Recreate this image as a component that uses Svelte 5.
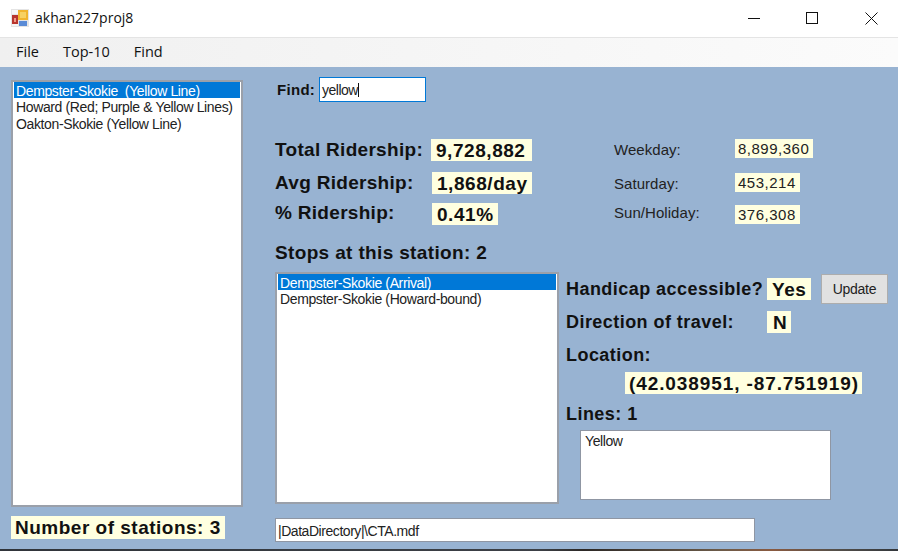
<script>
	let stations = ['Dempster-Skokie  (Yellow Line)', 'Howard (Red; Purple & Yellow Lines)', 'Oakton-Skokie (Yellow Line)'];
	let stops = ['Dempster-Skokie (Arrival)', 'Dempster-Skokie (Howard-bound)'];
	let totals = [
		{ label: 'Total Ridership:', value: '9,728,882', width: 101 },
		{ label: 'Avg Ridership:', value: '1,868/day', width: 100 },
		{ label: '% Ridership:', value: '0.41%', width: 66 }
	];
	let days = [
		{ label: 'Weekday:', value: '8,899,360', width: 78 },
		{ label: 'Saturday:', value: '453,214', width: 65 },
		{ label: 'Sun/Holiday:', value: '376,308', width: 65 }
	];
</script>

<div class="window">
	<header class="titlebar">
		<svg class="appicon" width="18" height="18" viewBox="0 0 18 18">
			<rect width="18" height="18" fill="#e4e4e4" />
			<rect x="1" y="1" width="7" height="4" fill="#f6f6f6" />
			<rect x="1" y="6" width="6" height="9" fill="#b8352e" />
			<rect x="3" y="9" width="2" height="4" fill="#ef9a86" />
			<rect x="1" y="15" width="6" height="2" fill="#f4f4f4" />
			<rect x="7" y="1" width="10" height="10" fill="#f1b42f" />
			<rect x="9" y="3" width="6" height="6" fill="#f7d163" />
			<rect x="8" y="12" width="8" height="5" fill="#5a8bd6" />
		</svg>
		<span class="title">akhan227proj8</span>
		<div class="controls">
			<svg width="12" height="1" viewBox="0 0 12 1"><rect width="12" height="1" fill="#111" /></svg>
			<svg width="12" height="12" viewBox="0 0 12 12"><rect x="0.5" y="0.5" width="11" height="11" fill="none" stroke="#111" /></svg>
			<svg width="13" height="13" viewBox="0 0 13 13"><path d="M0.5 0.5 L12.5 12.5 M12.5 0.5 L0.5 12.5" stroke="#111" fill="none" /></svg>
		</div>
	</header>

	<nav class="menu">
		<span>File</span>
		<span>Top-10</span>
		<span>Find</span>
	</nav>

	<main class="form">
		<section class="left">
			<ul class="list stations">
				{#each stations as s, i}
					<li class:sel={i === 0}>{s}</li>
				{/each}
			</ul>
			<div class="count">Number of stations: 3</div>
		</section>

		<section class="right">
			<div class="find">
				<label for="find">Find:</label>
				<div class="findbox" id="find">yellow<i class="caret"></i></div>
			</div>

			<div class="stats">
				<div class="totals">
					{#each totals as t}
						<div class="stat">
							<span class="biglabel">{t.label}</span>
							<span class="bigvalue" style="width: {t.width}px">{t.value}</span>
						</div>
					{/each}
				</div>
				<div class="days">
					{#each days as d}
						<div class="day">
							<span class="daylabel">{d.label}</span>
							<span class="dayvalue" style="width: {d.width}px">{d.value}</span>
						</div>
					{/each}
				</div>
			</div>

			<div class="stopshead">Stops at this station: 2</div>

			<div class="lower">
				<ul class="list stops">
					{#each stops as s, i}
						<li class:sel={i === 0}>{s}</li>
					{/each}
				</ul>
				<div class="details">
					<div class="handicap">
						<span class="biglabel small">Handicap accessible?</span>
						<span class="bigvalue yes">Yes</span>
						<button class="update">Update</button>
					</div>
					<div class="direction">
						<span class="biglabel small">Direction of travel:</span>
						<span class="bigvalue dir">N</span>
					</div>
					<div class="biglabel small location">Location:</div>
					<div class="bigvalue coords">(42.038951, -87.751919)</div>
					<div class="biglabel small lineshead">Lines: 1</div>
					<div class="lines">Yellow</div>
				</div>
			</div>

			<div class="path">|DataDirectory|\CTA.mdf</div>
		</section>
	</main>
	<div class="edge"></div>
</div>

<style>
	:global(body) {
		margin: 0;
		background: #98b3d2;
	}

	.window {
		width: 898px;
		height: 551px;
		display: flex;
		flex-direction: column;
		overflow: hidden;
		font-family: 'Liberation Sans', Arial, sans-serif;
		font-size: 14px;
		color: #111;
	}

	.titlebar {
		height: 37px;
		flex: none;
		display: flex;
		align-items: center;
		padding-left: 11px;
		background: #fff;
		border-bottom: 1px solid #e4e4e4;
	}

	.appicon {
		margin-right: 6px;
		margin-top: -2px;
	}

	.title {
		font-family: 'Open Sans', 'Noto Sans', sans-serif;
		font-size: 14px;
		margin-top: -2px;
	}

	.controls {
		margin-left: auto;
		display: flex;
		align-items: center;
		margin-right: 20px;
		margin-top: -1px;
	}

	.controls svg:nth-child(1) {
		margin-right: 46px;
	}

	.controls svg:nth-child(2) {
		margin-right: 47px;
	}

	.menu {
		height: 29px;
		flex: none;
		display: flex;
		align-items: center;
		gap: 24px;
		padding-left: 16px;
		padding-bottom: 2px;
		box-sizing: border-box;
		background: linear-gradient(to right, #f0f0f0, #fbfbfb);
		font-family: 'Open Sans', 'Noto Sans', sans-serif;
		font-size: 14.5px;
	}

	.form {
		flex: 1;
		display: flex;
		min-height: 0;
		background: #98b3d2;
	}

	.left {
		width: 232px;
		margin-left: 11px;
		padding-top: 13px;
		display: flex;
		flex-direction: column;
	}

	.list {
		list-style: none;
		margin: 0;
		padding: 0 1px;
		background: #fff;
		border: 2px solid #9aa0aa;
		box-sizing: border-box;
		font-size: 14px;
		letter-spacing: -0.37px;
		color: #222;
	}

	.list li {
		height: 16px;
		line-height: 18px;
		padding-left: 2px;
		white-space: pre;
	}

	.stations li {
		height: 16.4px;
	}

	.list li.sel {
		background: #0078d7;
		color: #fff;
	}

	.stations {
		height: 427px;
	}

	.count {
		margin-top: 9px;
		width: 214px;
		height: 23px;
		line-height: 24px;
		box-sizing: border-box;
		padding-left: 4px;
		background: #ffffe0;
		font-size: 19px;
		letter-spacing: 0.5px;
		font-weight: bold;
		white-space: nowrap;
	}

	.right {
		margin-left: 32px;
		width: 620px;
		display: flex;
		flex-direction: column;
	}

	.find {
		display: flex;
		align-items: center;
		margin-top: 10px;
		height: 25px;
		padding-left: 2px;
	}

	.find label {
		width: 42px;
		font-weight: bold;
		font-size: 15px;
		letter-spacing: 0.3px;
		line-height: 27px;
	}

	.findbox {
		width: 107px;
		height: 25px;
		box-sizing: border-box;
		border: 1px solid #0078d7;
		padding-left: 2px;
		background: #fff;
		font-size: 14px;
		letter-spacing: -0.5px;
		color: #222;
		display: flex;
		align-items: center;
	}

	.caret {
		display: inline-block;
		width: 1px;
		height: 14px;
		background: #111;
	}

	.stats {
		display: flex;
		margin-top: 37px;
		height: 106px;
	}

	.totals {
		width: 338px;
		display: flex;
		flex-direction: column;
	}

	.stat {
		display: flex;
		height: 22px;
		margin-bottom: 11px;
	}

	.stat:nth-child(2) {
		margin-bottom: 9px;
	}

	.stat:nth-child(n + 2) .bigvalue {
		margin-left: 1px;
	}

	.stat:nth-child(3) .biglabel {
		line-height: 19px;
	}

	.biglabel {
		width: 156px;
		flex: none;
		font-size: 19px;
		letter-spacing: 0.3px;
		font-weight: bold;
		line-height: 21px;
		white-space: nowrap;
	}

	.bigvalue {
		height: 22px;
		line-height: 23px;
		box-sizing: border-box;
		padding-left: 5px;
		background: #ffffe0;
		font-size: 19px;
		letter-spacing: 0.55px;
		font-weight: bold;
		white-space: nowrap;
	}

	.days {
		display: flex;
		flex-direction: column;
	}

	.day {
		display: flex;
		height: 19px;
		margin-bottom: 15px;
	}

	.day:nth-child(2) {
		margin-bottom: 13px;
	}

	.day:nth-child(3) .daylabel {
		line-height: 16px;
	}

	.daylabel {
		width: 122px;
		box-sizing: border-box;
		padding-left: 1px;
		font-size: 15px;
		line-height: 22px;
		letter-spacing: 0.05px;
		color: #222;
	}

	.dayvalue {
		height: 19px;
		line-height: 20px;
		box-sizing: border-box;
		padding-left: 3px;
		background: #ffffe0;
		font-size: 15px;
		letter-spacing: 0.5px;
		color: #222;
	}

	.stopshead {
		height: 27px;
		line-height: 16px;
		font-size: 19px;
		letter-spacing: 0.35px;
		font-weight: bold;
		white-space: nowrap;
	}

	.lower {
		display: flex;
		height: 232px;
	}

	.stops {
		width: 284px;
		flex: none;
		height: 232px;
	}

	.details {
		margin-left: 7px;
		flex: 1;
		display: flex;
		flex-direction: column;
		align-items: flex-start;
	}

	.handicap {
		display: flex;
		align-items: center;
		height: 32px;
		margin-top: 1px;
	}

	.biglabel.small {
		font-size: 18px;
		letter-spacing: 0.45px;
	}

	.handicap .biglabel {
		width: 201px;
	}

	.direction {
		display: flex;
		align-items: center;
		height: 22px;
		margin-top: 6px;
	}

	.direction .biglabel {
		width: 201px;
	}

	.yes {
		width: 44px;
	}

	.dir {
		width: 24px;
		padding-left: 6px;
	}

	.update {
		margin-left: 10px;
		width: 67px;
		height: 30px;
		padding: 0;
		background: #e1e1e1;
		border: 1px solid #adadad;
		font-family: inherit;
		font-size: 14px;
		letter-spacing: -0.3px;
		color: #222;
	}

	.location {
		margin-top: 11px;
		height: 22px;
		line-height: 23px;
	}

	.coords {
		margin-top: 6px;
		margin-left: 59px;
		width: 237px;
		letter-spacing: 0.9px;
		padding-left: 4px;
	}

	.lineshead {
		margin-top: 9px;
		height: 22px;
		line-height: 22px;
	}

	.lines {
		margin-top: 5px;
		margin-left: 14px;
		width: 251px;
		height: 70px;
		box-sizing: border-box;
		border: 1px solid #8f96a3;
		background: #fff;
		padding: 2px 4px;
		font-size: 14px;
		letter-spacing: -0.4px;
		line-height: 17px;
		color: #222;
	}

	.path {
		margin-top: 14px;
		width: 480px;
		height: 24px;
		line-height: 25px;
		box-sizing: border-box;
		border: 1px solid #8f96a3;
		background: #fff;
		padding-left: 2px;
		font-size: 14px;
		letter-spacing: -0.45px;
		color: #222;
	}

	.edge {
		flex: none;
		height: 2px;
		background: linear-gradient(to right, #30343a 0%, #3c4046 60%, #2c2826 65%, #6b5a48 80%, #8a5a40 86%, #55504a 93%, #33373c 100%);
	}
</style>
